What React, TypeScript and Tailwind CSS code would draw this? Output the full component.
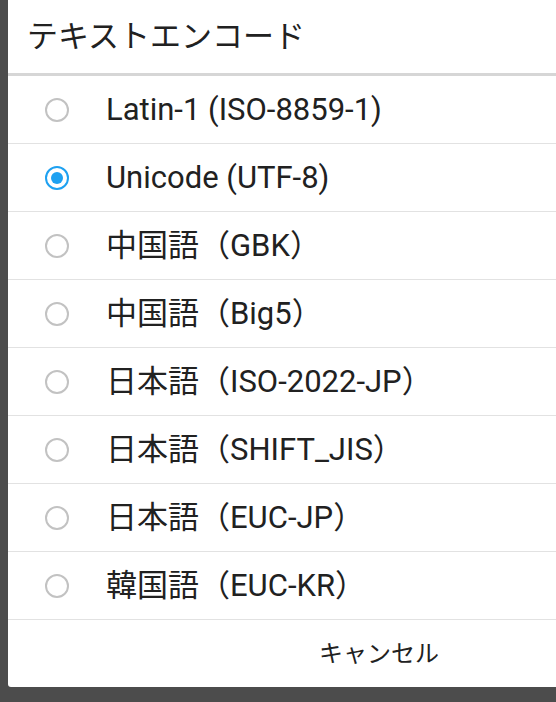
const encodings = [
  "Latin-1 (ISO-8859-1)",
  "Unicode (UTF-8)",
  "中国語（GBK）",
  "中国語（Big5）",
  "日本語（ISO-2022-JP）",
  "日本語（SHIFT_JIS）",
  "日本語（EUC-JP）",
  "韓国語（EUC-KR）",
];

const font = { fontFamily: 'Roboto, "Noto Sans CJK JP", sans-serif' };

function Radio({ checked }: { checked: boolean }) {
  if (checked) {
    return (
      <span className="flex h-[24px] w-[24px] shrink-0 items-center justify-center rounded-full border-[2.5px] border-[#1ea1f1]">
        <span className="h-[12px] w-[12px] rounded-full bg-[#1ea1f1]" />
      </span>
    );
  }
  return <span className="h-[24px] w-[24px] shrink-0 rounded-full border-2 border-[#c2c2c2]" />;
}

export default function App() {
  return (
    <div className="h-[702px] w-[556px] overflow-hidden bg-[#4c4c4c]" style={font}>
      <div className="ml-[8px] h-[687px] rounded-bl-[3px] bg-white">
        <div className="flex h-[76px] items-center border-b-[3px] border-[#d6d6d6] pl-[19px]">
          <span className="text-[31px] leading-none text-[#212121]">テキストエンコード</span>
        </div>
        {encodings.map((name, i) => (
          <div
            key={name}
            className="flex h-[68px] items-center border-b border-[#e2e2e2] pl-[37px]"
          >
            <Radio checked={i === 1} />
            <span className="ml-[37px] text-[31px] leading-none text-[#212121]">{name}</span>
          </div>
        ))}
        <div className="flex h-[67px] items-center justify-end pr-[117px]">
          <span className="text-[24px] leading-none text-[#212121]">キャンセル</span>
        </div>
      </div>
    </div>
  );
}
